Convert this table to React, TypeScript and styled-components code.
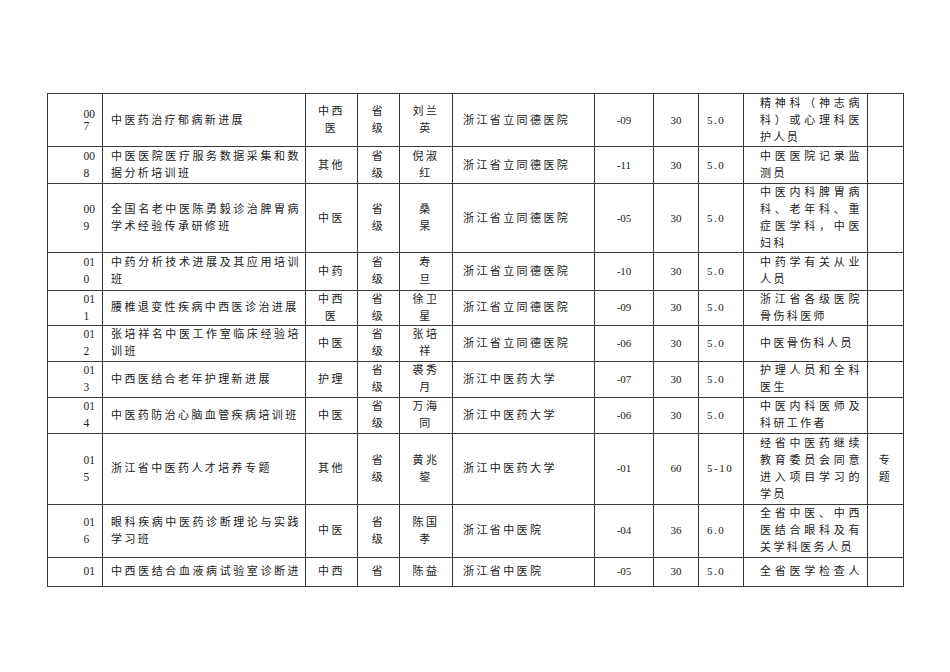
import React from "react";
import styled, { createGlobalStyle } from "styled-components";

const Global = createGlobalStyle`
  html, body { margin: 0; padding: 0; background: #ffffff; }
  body { font-family: "Liberation Serif", "Noto Sans CJK SC", serif; color: #222; }
`;

type Row = {
  no: string[];
  title: string[];
  cat: string[];
  lvl: string[];
  name: string[];
  org: string;
  code: string;
  hours: string;
  credit: string;
  target: string[];
  note: string[];
  h: number;
  tightNo?: boolean;
  clipped?: boolean;
};

const rows: Row[] = [
  { no: ["00", "7"], title: ["中医药治疗郁病新进展"], cat: ["中西", "医"], lvl: ["省", "级"], name: ["刘兰", "英"], org: "浙江省立同德医院", code: "-09", hours: "30", credit: "5.0", target: ["精神科（神志病", "科）或心理科医", "护人员"], note: [], h: 53, tightNo: true },
  { no: ["00", "8"], title: ["中医医院医疗服务数据采集和数", "据分析培训班"], cat: ["其他"], lvl: ["省", "级"], name: ["倪淑", "红"], org: "浙江省立同德医院", code: "-11", hours: "30", credit: "5.0", target: ["中医医院记录监", "测员"], note: [], h: 37 },
  { no: ["00", "9"], title: ["全国名老中医陈勇毅诊治脾胃病", "学术经验传承研修班"], cat: ["中医"], lvl: ["省", "级"], name: ["桑", "杲"], org: "浙江省立同德医院", code: "-05", hours: "30", credit: "5.0", target: ["中医内科脾胃病", "科、老年科、重", "症医学科，中医", "妇科"], note: [], h: 68.5 },
  { no: ["01", "0"], title: ["中药分析技术进展及其应用培训", "班"], cat: ["中药"], lvl: ["省", "级"], name: ["寿", "旦"], org: "浙江省立同德医院", code: "-10", hours: "30", credit: "5.0", target: ["中药学有关从业", "人员"], note: [], h: 37.5 },
  { no: ["01", "1"], title: ["腰椎退变性疾病中西医诊治进展"], cat: ["中西", "医"], lvl: ["省", "级"], name: ["徐卫", "星"], org: "浙江省立同德医院", code: "-09", hours: "30", credit: "5.0", target: ["浙江省各级医院", "骨伤科医师"], note: [], h: 35 },
  { no: ["01", "2"], title: ["张培祥名中医工作室临床经验培", "训班"], cat: ["中医"], lvl: ["省", "级"], name: ["张培", "祥"], org: "浙江省立同德医院", code: "-06", hours: "30", credit: "5.0", target: ["中医骨伤科人员"], note: [], h: 36 },
  { no: ["01", "3"], title: ["中西医结合老年护理新进展"], cat: ["护理"], lvl: ["省", "级"], name: ["裘秀", "月"], org: "浙江中医药大学", code: "-07", hours: "30", credit: "5.0", target: ["护理人员和全科", "医生"], note: [], h: 36 },
  { no: ["01", "4"], title: ["中医药防治心脑血管疾病培训班"], cat: ["中医"], lvl: ["省", "级"], name: ["万海", "同"], org: "浙江中医药大学", code: "-06", hours: "30", credit: "5.0", target: ["中医内科医师及", "科研工作者"], note: [], h: 36 },
  { no: ["01", "5"], title: ["浙江省中医药人才培养专题"], cat: ["其他"], lvl: ["省", "级"], name: ["黄兆", "鋆"], org: "浙江中医药大学", code: "-01", hours: "60", credit: "5-10", target: ["经省中医药继续", "教育委员会同意", "进入项目学习的", "学员"], note: ["专", "题"], h: 71 },
  { no: ["01", "6"], title: ["眼科疾病中医药诊断理论与实践", "学习班"], cat: ["中医"], lvl: ["省", "级"], name: ["陈国", "孝"], org: "浙江省中医院", code: "-04", hours: "36", credit: "6.0", target: ["全省中医、中西", "医结合眼科及有", "关学科医务人员"], note: [], h: 53 },
  { no: ["01"], title: ["中西医结合血液病试验室诊断进"], cat: ["中西"], lvl: ["省"], name: ["陈益"], org: "浙江省中医院", code: "-05", hours: "30", credit: "5.0", target: ["全省医学检查人"], note: [], h: 29, clipped: true },
];

const colWidths = [55, 203, 52, 42, 53, 142, 59, 45, 45, 124, 36];

const Page = styled.div`
  padding: 93px 0 0 47px;
`;

const Table = styled.table`
  border-collapse: collapse;
  table-layout: fixed;
  width: 856px;
`;

const Col = styled.col<{ $w: number }>`
  width: ${(p) => p.$w}px;
`;

const Tr = styled.tr<{ $h: number }>`
  height: ${(p) => p.$h}px;
`;

const Cell = styled.td<{ $align?: "left" | "center" | "right"; $pl?: number; $pr?: number; $cjk?: boolean }>`
  border: 1px solid #3a3a3a;
  padding: 0 ${(p) => p.$pr ?? 0}px 0 ${(p) => p.$pl ?? 0}px;
  vertical-align: middle;
  text-align: ${(p) => p.$align ?? "left"};
  font-size: 11px;
  line-height: 17px;
  letter-spacing: ${(p) => (p.$cjk ? "2.4px" : "0")};
  color: #222;
  overflow: hidden;
  white-space: nowrap;
`;

const Line = styled.span<{ $justify?: boolean }>`
  display: block;
  text-align-last: ${(p) => (p.$justify ? "justify" : "auto")};
`;

const NoBlock = styled.span<{ $tight?: boolean }>`
  display: block;
  width: max-content;
  margin-left: auto;
  text-align: left;
  font-size: 11.5px;
  line-height: ${(p) => (p.$tight ? "12px" : "17px")};
`;

const Credit = styled.span`
  letter-spacing: 1.5px;
`;

function Lines({ lines, clipped }: { lines: string[]; clipped?: boolean }) {
  return (
    <>
      {lines.map((l, i) => (
        <Line key={i} $justify={clipped || i < lines.length - 1}>
          {l}
        </Line>
      ))}
    </>
  );
}

function Plain({ lines }: { lines: string[] }) {
  return (
    <>
      {lines.map((l, i) => (
        <Line key={i}>{l}</Line>
      ))}
    </>
  );
}

export default function App() {
  return (
    <Page>
      <Global />
      <Table>
        <colgroup>
          {colWidths.map((w, i) => (
            <Col key={i} $w={w} />
          ))}
        </colgroup>
        <tbody>
          {rows.map((r, i) => (
            <Tr key={i} $h={r.h}>
              <Cell $pr={7}>
                <NoBlock $tight={r.tightNo}>
                  {r.no.map((n, j) => (
                    <Line key={j}>{n}</Line>
                  ))}
                </NoBlock>
              </Cell>
              <Cell $pl={8} $pr={4} $cjk>
                <Lines lines={r.title} clipped={r.clipped} />
              </Cell>
              <Cell $align="center" $cjk>
                <Plain lines={r.cat} />
              </Cell>
              <Cell $align="center" $cjk>
                <Plain lines={r.lvl} />
              </Cell>
              <Cell $align="center" $cjk>
                <Plain lines={r.name} />
              </Cell>
              <Cell $pl={10} $cjk>
                {r.org}
              </Cell>
              <Cell $align="center">{r.code}</Cell>
              <Cell $align="center">{r.hours}</Cell>
              <Cell $pl={8}>
                <Credit>{r.credit}</Credit>
              </Cell>
              <Cell $pl={16} $pr={5} $cjk>
                <Lines lines={r.target} clipped={r.clipped} />
              </Cell>
              <Cell $align="center" $cjk>
                <Plain lines={r.note} />
              </Cell>
            </Tr>
          ))}
        </tbody>
      </Table>
    </Page>
  );
}
